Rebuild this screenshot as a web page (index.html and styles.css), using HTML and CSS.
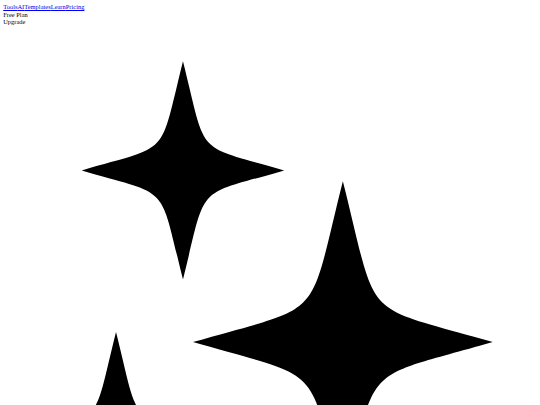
FILE: index.html
```html
<!DOCTYPE html>
<html lang="en">
<head>
<meta charset="utf-8">
<title>Sparkles</title>
<link rel="stylesheet" href="styles.css">
</head>
<body>
<nav class="nav"><a href="#">Tools</a><a href="#">AI</a><a href="#">Templates</a><a href="#">Learn</a><a href="#">Pricing</a></nav>
<div class="plan">Free Plan</div>
<div class="upgrade">Upgrade</div>
<svg class="sparkles" viewBox="0 0 534 534" xmlns="http://www.w3.org/2000/svg" aria-hidden="true">
  <path d="M180.1 36.3 C204.58 134.03 190.74 119.11 281.4 145.5 C190.74 171.89 204.58 156.97 180.1 254.7 C155.62 156.97 169.46 171.89 78.8 145.5 C169.46 119.11 155.62 134.03 180.1 36.3 Z"/>
  <path d="M340.1 156.3 C376.36 300.39 355.85 278.39 490.1 317.3 C355.85 356.21 376.36 334.21 340.1 478.3 C303.84 334.21 324.35 356.21 190.1 317.3 C324.35 278.39 303.84 300.39 340.1 156.3 Z"/>
  <path d="M113.1 307.1 C137.51 404.65 123.71 389.75 214.1 416.1 C123.71 442.45 137.51 427.55 113.1 525.1 C88.69 427.55 102.49 442.45 12.1 416.1 C102.49 389.75 88.69 404.65 113.1 307.1 Z"/>
</svg>
</body>
</html>
```

FILE: styles.css
```css
body {
  margin: 3.2px;
  font-family: "Liberation Serif", "Times New Roman", serif;
  font-size: 6.46px;
  line-height: 1.15;
  color: #000;
  background: #fff;
}

.nav a {
  color: #0000ee;
  text-decoration: underline;
}

.sparkles {
  display: block;
  width: 100%;
  height: auto;
  fill: #000;
  overflow: visible;
}
```
